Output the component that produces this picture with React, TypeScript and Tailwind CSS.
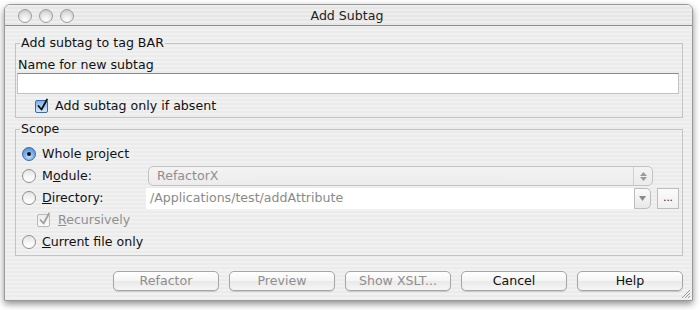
import React from "react";

function Radio({ checked }: { checked?: boolean }) {
  return (
    <span
      className={
        checked
          ? "flex w-[14px] h-[14px] shrink-0 items-center justify-center rounded-full border border-[#3d6aa8] bg-[radial-gradient(circle_at_50%_70%,#c6e0fa_0%,#7fb2ea_45%,#3f7fd0_100%)]"
          : "flex w-[14px] h-[14px] shrink-0 items-center justify-center rounded-full border border-[#8e8e8e] bg-[linear-gradient(180deg,#e4e4e4_0%,#f8f8f8_60%,#ffffff_100%)]"
      }
    >
      {checked && <span className="w-[4px] h-[4px] rounded-full bg-[#111]" />}
    </span>
  );
}

function Check({ disabled }: { disabled?: boolean }) {
  return (
    <span
      className={
        disabled
          ? "relative flex w-[13px] h-[13px] shrink-0 items-center justify-center rounded-[2px] border border-[#b8b8b8] bg-[linear-gradient(180deg,#ececec,#fafafa)]"
          : "relative flex w-[13px] h-[13px] shrink-0 items-center justify-center rounded-[2px] border border-[#3d6aa8] bg-[linear-gradient(180deg,#7fb2ea_0%,#a9cdf3_50%,#d4e8fb_100%)]"
      }
    >
      <svg width="13" height="14" viewBox="0 0 13 14" className="absolute left-[0px] top-[-3px]">
        <path
          d="M2.5 8 L5.5 11.5 L11 1.5"
          fill="none"
          stroke={disabled ? "#a0a0a0" : "#111"}
          strokeWidth="1.8"
          strokeLinecap="round"
          strokeLinejoin="round"
        />
      </svg>
    </span>
  );
}

function Btn({ label, disabled }: { label: string; disabled?: boolean }) {
  return (
    <div
      className={
        "flex w-[106px] h-[20px] items-center justify-center rounded-[5px] border border-[#a6a6a6] bg-[linear-gradient(180deg,#ffffff_0%,#f4f4f4_50%,#e9e9e9_51%,#f6f6f6_100%)] shadow-[0_1px_1px_rgba(0,0,0,0.15)] " +
        (disabled ? "text-[#8f8f8f]" : "text-[#111]")
      }
    >
      {label}
    </div>
  );
}

export default function App() {
  return (
    <div className="w-[700px] h-[310px] bg-white pt-[4px] pl-[4px] font-['DejaVu_Sans',sans-serif] text-[12.6px] leading-[16px] text-[#111]">
      <div className="relative flex flex-col w-[689px] h-[297px] rounded-t-[6px] border border-[#9a9a9a] shadow-[0_3px_7px_rgba(0,0,0,0.45)] overflow-hidden bg-[repeating-linear-gradient(180deg,#f1f1f1_0px,#f1f1f1_2px,#ebebeb_2px,#ebebeb_4px)]">
        {/* title bar */}
        <div className="relative flex h-[21px] shrink-0 items-center border-b border-[#8c8c8c] bg-[repeating-linear-gradient(180deg,#eeeeee_0px,#eeeeee_2px,#e6e6e6_2px,#e6e6e6_4px)]">
          <div className="flex gap-[7px] pl-[13px] pt-[1px]">
            <span className="w-[14px] h-[14px] rounded-full border border-[#9c9c9c] bg-[radial-gradient(circle_at_50%_80%,#ffffff_0%,#e4e4e4_50%,#bdbdbd_100%)]" />
            <span className="w-[14px] h-[14px] rounded-full border border-[#9c9c9c] bg-[radial-gradient(circle_at_50%_80%,#ffffff_0%,#e4e4e4_50%,#bdbdbd_100%)]" />
            <span className="w-[14px] h-[14px] rounded-full border border-[#9c9c9c] bg-[radial-gradient(circle_at_50%_80%,#ffffff_0%,#e4e4e4_50%,#bdbdbd_100%)]" />
          </div>
          <div className="flex-1 pt-[1px] text-center text-[12.6px] text-[#222] pr-[72px]">Add Subtag</div>
        </div>

        {/* content */}
        <div className="flex flex-col pl-[10px] pr-[9px]">
          <fieldset className="mt-[9px] border border-[#c4c4c4] pl-[1px] pr-[3px] pb-[3px]">
            <legend className="ml-[3px] px-[1px] leading-[16px]">Add subtag to tag BAR</legend>
            <div className="mt-[6px] ml-[1px] leading-[16px]">Name for new subtag</div>
            <div className="h-[21px] border border-[#c2c2c2] border-t-[#8a8a8a] bg-white" />
            <div className="mt-[4px] flex h-[16px] items-center gap-[7px] pl-[18px]">
              <Check />
              <span>Add subtag only if absent</span>
            </div>
          </fieldset>

          <fieldset className="mt-[3px] border border-[#c4c4c4] pl-[6px] pr-[3px] pb-[2px]">
            <legend className="ml-[-2px] px-[1px] leading-[16px]">Scope</legend>
            <div className="mt-[6px] flex h-[22px] items-center gap-[6px]">
              <Radio checked />
              <span>
                Whole <span className="underline">p</span>roject
              </span>
            </div>
            <div className="flex h-[22px] items-center">
              <div className="flex w-[126px] items-center gap-[6px]">
                <Radio />
                <span>
                  M<span className="underline">o</span>dule:
                </span>
              </div>
              <div className="flex h-[20px] w-[505px] items-center rounded-[5px] border border-[#c2c2c2] bg-[linear-gradient(180deg,#f3f3f3,#ececec)] text-[#8f8f8f]">
                <span className="flex-1 pl-[8px]">RefactorX</span>
                <div className="flex h-full w-[19px] flex-col items-center justify-center gap-[1px] border-l border-[#d0d0d0]">
                  <svg width="7" height="4" viewBox="0 0 7 4">
                    <path d="M0 4 L3.5 0 L7 4 Z" fill="#9a9a9a" />
                  </svg>
                  <svg width="7" height="4" viewBox="0 0 7 4">
                    <path d="M0 0 L3.5 4 L7 0 Z" fill="#9a9a9a" />
                  </svg>
                </div>
              </div>
            </div>
            <div className="flex h-[22px] items-center">
              <div className="flex w-[124px] items-center gap-[6px]">
                <Radio />
                <span>
                  <span className="underline">D</span>irectory:
                </span>
              </div>
              <div className="flex h-[21px] w-[505px] items-center">
                <div className="flex h-full flex-1 items-center bg-white pl-[4px] text-[#8a8a8a]">
                  /Applications/test/addAttribute
                </div>
                <div className="flex h-full w-[17px] items-center justify-center rounded-r-[5px] border border-[#bdbdbd] bg-[linear-gradient(180deg,#fbfbfb,#e8e8e8)]">
                  <svg width="7" height="5" viewBox="0 0 7 5">
                    <path d="M0 0 L3.5 5 L7 0 Z" fill="#8a8a8a" />
                  </svg>
                </div>
              </div>
              <div className="ml-[6px] flex h-[21px] w-[22px] items-center justify-center border border-[#bdbdbd] bg-[linear-gradient(180deg,#fbfbfb,#efefef)] text-[10px] leading-[10px]">
                ...
              </div>
            </div>
            <div className="flex h-[22px] items-center gap-[8px] pl-[15px] text-[#8f8f8f]">
              <Check disabled />
              <span>
                <span className="underline">R</span>ecursively
              </span>
            </div>
            <div className="flex h-[22px] items-center gap-[6px]">
              <Radio />
              <span>
                <span className="underline">C</span>urrent file only
              </span>
            </div>
          </fieldset>

          <div className="mt-[15px] flex justify-end gap-[10px]">
            <Btn label="Refactor" disabled />
            <Btn label="Preview" disabled />
            <Btn label="Show XSLT..." disabled />
            <Btn label="Cancel" />
            <Btn label="Help" />
          </div>
        </div>

        <svg width="11" height="11" viewBox="0 0 11 11" className="absolute right-[1px] bottom-[1px]">
          <path d="M10 2 L2 10 M10 5 L5 10 M10 8 L8 10" stroke="#9a9a9a" strokeWidth="1" />
        </svg>
      </div>
    </div>
  );
}
